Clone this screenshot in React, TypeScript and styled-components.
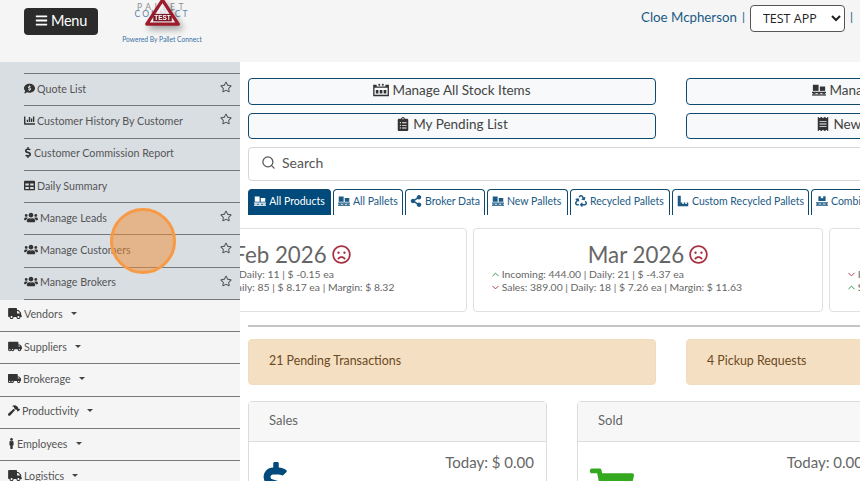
import styled, { createGlobalStyle } from 'styled-components';
import { ChevronDown, ChevronUp, Search } from 'lucide-react';
import {
  FaBars,
  FaChartBar,
  FaClipboardList,
  FaCommentDollar,
  FaDollarSign,
  FaHammer,
  FaMale,
  FaPallet,
  FaReceipt,
  FaRecycle,
  FaRegFrown,
  FaRegStar,
  FaShareAlt,
  FaShoppingCart,
  FaTable,
  FaTruck,
  FaTruckMoving,
  FaUsers,
} from 'react-icons/fa';

const GlobalStyle = createGlobalStyle`
  html, body {
    margin: 0;
    height: 100%;
    overflow: hidden;
    background: #fff;
    font-family: Lato, "Open Sans", sans-serif;
    color: #555;
  }
  * { box-sizing: border-box; }
`;

const PalletBoxes = () => (
  <svg width="1em" height="1em" viewBox="0 0 16 16" fill="currentColor">
    <rect x="1" y="2" width="6.5" height="7" />
    <rect x="9" y="4" width="6" height="5" />
    <rect x="0" y="10" width="16" height="1.6" />
    <rect x="1" y="11.6" width="3" height="1.4" />
    <rect x="6.5" y="11.6" width="3" height="1.4" />
    <rect x="12" y="11.6" width="3" height="1.4" />
    <rect x="0" y="13" width="16" height="1.4" />
  </svg>
);

const StockIcon = () => (
  <svg width="1.15em" height="1em" viewBox="0 0 18 16" fill="currentColor">
    <path d="M0 2h4v2h10V2h4v13H0z M1.5 5.5V13.5h15V5.5z" fillRule="evenodd" />
    <rect x="3" y="8" width="3" height="4" />
    <rect x="7.5" y="8" width="3" height="4" />
    <rect x="12" y="8" width="3" height="4" />
    <rect x="6" y="1" width="2" height="2" />
    <rect x="10" y="1" width="2" height="2" />
  </svg>
);

const CustomStepsIcon = () => (
  <svg width="1em" height="1em" viewBox="0 0 16 16" fill="currentColor">
    <path d="M1 1h4v9h2v2h2v-2h2v2h2v-2h2v5H1z" />
  </svg>
);

const subItems = [
  { icon: <FaCommentDollar />, w: 11, label: 'Quote List', star: true },
  { icon: <FaChartBar />, w: 11, label: 'Customer History By Customer', star: true },
  { icon: <FaDollarSign />, w: 8, label: 'Customer Commission Report', star: false },
  { icon: <FaTable />, w: 11, label: 'Daily Summary', star: false },
  { icon: <FaUsers />, w: 14, label: 'Manage Leads', star: true },
  { icon: <FaUsers />, w: 14, label: 'Manage Customers', star: true },
  { icon: <FaUsers />, w: 14, label: 'Manage Brokers', star: true },
];

const menuItems = [
  { icon: <FaTruck />, w: 14, label: 'Vendors' },
  { icon: <FaTruckMoving />, w: 14, label: 'Suppliers' },
  { icon: <FaTruckMoving />, w: 13, label: 'Brokerage' },
  { icon: <FaHammer />, w: 12, label: 'Productivity' },
  { icon: <FaMale />, w: 7, label: 'Employees' },
  { icon: <FaTruck />, w: 14, label: 'Logistics' },
];

const tabs = [
  { icon: <PalletBoxes />, label: 'All Products', width: 83 },
  { icon: <PalletBoxes />, label: 'All Pallets', width: 70 },
  { icon: <FaShareAlt />, label: 'Broker Data', width: 80 },
  { icon: <PalletBoxes />, label: 'New Pallets', width: 81 },
  { icon: <FaRecycle />, label: 'Recycled Pallets', width: 100 },
  { icon: <CustomStepsIcon />, label: 'Custom Recycled Pallets', width: 137 },
  { icon: <FaPallet />, label: 'Combined Pallets', width: 120 },
];

const App = () => {
  return (
    <Page>
      <GlobalStyle />
      <Header>
        <MenuButton>
          <FaBars />
          Menu
        </MenuButton>
        <Logo>
          <LogoWord>PALLET</LogoWord>
          <LogoWord $blue>CONNECT</LogoWord>
          <LogoMark viewBox="0 0 40 30">
            <path d="M20 1 L37 27 H3 Z" fill="#fff" fillOpacity="0.75" stroke="#9c1c2c" strokeWidth="3.6" strokeLinejoin="round" />
            <rect x="10" y="16" width="20" height="8" fill="#7c1826" />
            <text x="20" y="23" textAnchor="middle" fontSize="7" fontWeight="700" fill="#fff" fontFamily="Liberation Sans, sans-serif">
              TEST
            </text>
          </LogoMark>
          <LogoCaption>Powered By Pallet Connect</LogoCaption>
        </Logo>
        <UserArea>
          <UserName>Cloe Mcpherson</UserName>
          <Pipe>|</Pipe>
          <AppSelect defaultValue="TEST APP">
            <option>TEST APP</option>
          </AppSelect>
          <Pipe>|</Pipe>
        </UserArea>
      </Header>
      <Body>
        <Sidebar>
          <SubGroup>
            {subItems.map((item) => (
              <SubRow key={item.label}>
                <RowIcon $w={item.w}>{item.icon}</RowIcon>
                {item.label}
                {item.star && (
                  <Star>
                    <FaRegStar />
                  </Star>
                )}
              </SubRow>
            ))}
          </SubGroup>
          {menuItems.map((item) => (
            <MenuRow key={item.label}>
              <RowIcon $w={item.w}>{item.icon}</RowIcon>
              {item.label}
              <Caret />
            </MenuRow>
          ))}
          <ClickMarker />
        </Sidebar>
        <Main>
          <ButtonGrid>
            <ActionButton>
              <StockIcon />
              Manage All Stock Items
            </ActionButton>
            <ActionButton>
              <PalletBoxes />
              Manage All Pallet Items
            </ActionButton>
            <ActionButton>
              <FaClipboardList />
              My Pending List
            </ActionButton>
            <ActionButton>
              <FaReceipt />
              New Pending Request
            </ActionButton>
          </ButtonGrid>
          <SearchBox>
            <Search size={15} strokeWidth={2} />
            Search
          </SearchBox>
          <TabRow>
            {tabs.map((tab, i) => (
              <Tab key={tab.label} $active={i === 0} $width={tab.width}>
                {tab.icon}
                {tab.label}
              </Tab>
            ))}
          </TabRow>
          <CardRow>
            <MonthCard>
              <MonthTitle>
                Feb 2026
                <FaRegFrown />
              </MonthTitle>
              <StatLine>
                <Up size={11} /> Incoming: 1310.00 | Daily: 11 | $ -0.15 ea
              </StatLine>
              <StatLine>
                <Down size={11} /> Sales: 11,704.00 | Daily: 85 | $ 8.17 ea | Margin: $ 8.32
              </StatLine>
            </MonthCard>
            <MonthCard>
              <MonthTitle>
                Mar 2026
                <FaRegFrown />
              </MonthTitle>
              <StatLine>
                <Up size={11} /> Incoming: 444.00 | Daily: 21 | $ -4.37 ea
              </StatLine>
              <StatLine>
                <Down size={11} /> Sales: 389.00 | Daily: 18 | $ 7.26 ea | Margin: $ 11.63
              </StatLine>
            </MonthCard>
            <MonthCard>
              <MonthTitle>
                Apr 2026
                <FaRegFrown />
              </MonthTitle>
              <StatLine>
                <Down size={11} /> Incoming: 120.00 | Daily: 9 | $ -2.10 ea
              </StatLine>
              <StatLine>
                <Up size={11} /> Sales: 410.00 | Daily: 20 | $ 7.90 ea | Margin: $ 10.00
              </StatLine>
            </MonthCard>
          </CardRow>
          <Rule />
          <AlertGrid>
            <Alert>21 Pending Transactions</Alert>
            <Alert>4 Pickup Requests</Alert>
          </AlertGrid>
          <PanelRow>
            <Panel>
              <PanelHead>Sales</PanelHead>
              <PanelBody>
                <BigIcon $color="#004a7c" $left={5} $top={20}>
                  <FaDollarSign />
                </BigIcon>
                <Today>Today: $ 0.00</Today>
              </PanelBody>
            </Panel>
            <Panel>
              <PanelHead>Sold</PanelHead>
              <PanelBody>
                <BigIcon $color="#34a81f" $left={12} $top={24}>
                  <FaShoppingCart />
                </BigIcon>
                <Today>Today: 0.00</Today>
              </PanelBody>
            </Panel>
          </PanelRow>
        </Main>
      </Body>
    </Page>
  );
};
export default App;

const Page = styled.div`
  width: 860px;
  height: 481px;
  overflow: hidden;
  display: flex;
  flex-direction: column;
`;

const Header = styled.header`
  height: 62px;
  flex: none;
  background: #f5f5f5;
  display: flex;
  align-items: flex-start;
  padding-left: 24px;
`;

const MenuButton = styled.button`
  width: 74px;
  height: 27px;
  margin-top: 8px;
  border: 0;
  border-radius: 4px;
  background: #2b2b2b;
  color: #fff;
  font: 400 14.5px Lato, sans-serif;
  letter-spacing: -0.3px;
  display: flex;
  align-items: center;
  justify-content: center;
  gap: 3px;
  padding: 0 0 2px;
  svg {
    font-size: 13px;
  }
`;

const Logo = styled.div`
  position: relative;
  width: 90px;
  margin-left: 19px;
  padding-top: 4px;
  text-align: center;
`;

const LogoWord = styled.div<{ $blue?: boolean }>`
  font-size: 8.5px;
  line-height: 6.5px;
  letter-spacing: ${(p) => (p.$blue ? '2px' : '3.5px')};
  color: ${(p) => (p.$blue ? '#5c83a8' : '#8a8f96')};
`;

const LogoMark = styled.svg`
  position: absolute;
  left: 27px;
  top: -1px;
  width: 37px;
  height: 28px;
  filter: drop-shadow(3px 4px 3px rgba(0, 0, 0, 0.35));
`;

const LogoCaption = styled.div`
  margin-top: 18px;
  font-size: 6.7px;
  line-height: 9px;
  color: #3a72a6;
  white-space: nowrap;
`;

const UserArea = styled.div`
  margin-left: auto;
  width: 219px;
  height: 27px;
  margin-top: 5px;
  display: flex;
  align-items: center;
  flex: none;
  color: #1a5a85;
  font-size: 13.3px;
`;

const UserName = styled.span`
  color: #1a5a85;
  white-space: nowrap;
  padding-bottom: 4px;
`;

const Pipe = styled.span`
  margin: 0 5px;
  font-size: 12px;
  padding-bottom: 4px;
`;

const AppSelect = styled.select`
  width: 95px;
  height: 27px;
  border: 1px solid #555;
  border-radius: 4px;
  background: #fff;
  color: #222;
  font: 400 12.5px "Open Sans", sans-serif;
  padding-left: 8px;
`;

const Body = styled.div`
  flex: 1;
  display: flex;
  min-height: 0;
`;

const Sidebar = styled.nav`
  position: relative;
  width: 240px;
  flex: none;
  background: #f5f5f5;
  font-size: 10.7px;
  color: #555;
`;

const SubGroup = styled.div`
  background: #d9dee3;
  padding: 11px 0 0 24px;
`;

const SubRow = styled.div`
  height: 32.3px;
  border-top: 1px solid #777;
  display: flex;
  align-items: center;
  gap: 2px;
  position: relative;
  padding-bottom: 3px;
  white-space: nowrap;
  color: #555;
  &:last-child {
    height: 33px;
    border-bottom: 1px solid #777;
  }
`;

const RowIcon = styled.span<{ $w: number }>`
  display: inline-flex;
  flex: none;
  justify-content: flex-start;
  width: ${(p) => p.$w}px;
  color: #333;
  svg {
    width: 100%;
    height: 11px;
  }
`;

const Star = styled.span`
  position: absolute;
  right: 8px;
  top: 7px;
  font-size: 12px;
  color: #555;
`;

const MenuRow = styled.div`
  height: 32.3px;
  padding: 0 0 3px 8px;
  border-bottom: 1px solid #777;
  display: flex;
  align-items: center;
  gap: 2px;
  white-space: nowrap;
`;

const Caret = styled.span`
  margin-left: 6px;
  border-top: 3px solid #444;
  border-left: 3px solid transparent;
  border-right: 3px solid transparent;
`;

const ClickMarker = styled.div`
  position: absolute;
  left: 110px;
  top: 146px;
  width: 66px;
  height: 66px;
  border-radius: 50%;
  border: 3px solid #f79a45;
  background: rgba(240, 140, 50, 0.5);
`;

const Main = styled.main`
  flex: none;
  width: 620px;
  padding: 16px 0 0 8px;
  overflow: hidden;
  background: #fff;
`;

const ButtonGrid = styled.div`
  display: grid;
  grid-template-columns: 408px 408px;
  gap: 8px 30px;
`;

const ActionButton = styled.button`
  height: 26.5px;
  border: 1px solid #0f4a6e;
  border-radius: 4px;
  background: #f7f9fa;
  color: #444;
  font: 400 13.5px Lato, sans-serif;
  display: flex;
  align-items: center;
  justify-content: center;
  gap: 3px;
  padding: 0 0 3px;
  white-space: nowrap;
  svg {
    font-size: 14px;
    color: #333;
  }
`;

const SearchBox = styled.div`
  width: 640px;
  height: 34px;
  margin-top: 8px;
  border: 1px solid #d4d6d8;
  border-radius: 4px;
  display: flex;
  align-items: center;
  gap: 6px;
  padding: 0 0 4px 12px;
  font-size: 14px;
  color: #555;
`;

const TabRow = styled.div`
  display: flex;
  gap: 2px;
  margin-top: 8px;
  width: 700px;
`;

const Tab = styled.div<{ $active?: boolean; $width: number }>`
  flex: none;
  width: ${(p) => p.$width}px;
  height: 26px;
  border: 1px solid #0f4a6e;
  border-bottom: 0;
  border-radius: 4px 4px 0 0;
  background: ${(p) => (p.$active ? '#004a7c' : '#fff')};
  color: ${(p) => (p.$active ? '#fff' : '#1a5a85')};
  font-size: 10.5px;
  display: flex;
  align-items: center;
  justify-content: ${(p) => (p.$active ? 'center' : 'flex-start')};
  gap: 3px;
  padding: 0 0 3px ${(p) => (p.$active ? 0 : 4)}px;
  white-space: nowrap;
  svg {
    font-size: 12px;
    flex: none;
  }
`;

const CardRow = styled.div`
  display: flex;
  gap: 6px;
  margin: 13px 0 0 -131px;
  width: 1100px;
`;

const MonthCard = styled.div`
  flex: none;
  width: 350px;
  height: 84px;
  border: 1px solid #dfdfdf;
  border-radius: 4px;
  padding-top: 12px;
  text-align: center;
`;

const MonthTitle = styled.div`
  font-size: 22.3px;
  line-height: 27px;
  color: #666;
  display: flex;
  justify-content: center;
  align-items: center;
  gap: 5px;
  svg {
    font-size: 19px;
    color: #a83244;
  }
`;

const StatLine = styled.div`
  font-size: 10.4px;
  line-height: 13px;
  color: #666;
  text-align: left;
  padding-left: 16px;
  white-space: nowrap;
  svg {
    margin-right: -2px;
  }
`;

const Up = styled(ChevronUp)`
  color: #2d8a34;
  vertical-align: -2px;
`;

const Down = styled(ChevronDown)`
  color: #a83244;
  vertical-align: -2px;
`;

const Rule = styled.div`
  height: 2px;
  margin-top: 13px;
  background: #c4c4c4;
`;

const AlertGrid = styled.div`
  display: grid;
  grid-template-columns: 408px 408px;
  gap: 30px;
  margin-top: 12px;
`;

const Alert = styled.div`
  height: 46px;
  border: 1px solid #f0dcc0;
  border-radius: 4px;
  background: #f5dfc3;
  color: #6b4a22;
  font-size: 12.4px;
  display: flex;
  align-items: center;
  padding: 0 0 3px 20px;
`;

const PanelRow = styled.div`
  display: flex;
  gap: 30px;
  margin-top: 16px;
`;

const Panel = styled.div`
  flex: none;
  width: 299px;
  height: 200px;
  border: 1px solid #dcdcdc;
  border-radius: 4px;
`;

const PanelHead = styled.div`
  height: 40px;
  background: #f7f7f7;
  border-bottom: 1px solid #dcdcdc;
  display: flex;
  align-items: center;
  padding: 0 0 3px 20px;
  font-size: 13px;
  color: #666;
`;

const PanelBody = styled.div`
  position: relative;
  padding: 11px 12px 0 0;
`;

const BigIcon = styled.span<{ $color: string; $left: number; $top: number }>`
  position: absolute;
  left: ${(p) => p.$left}px;
  top: ${(p) => p.$top}px;
  font-size: 44px;
  color: ${(p) => p.$color};
`;

const Today = styled.div`
  text-align: right;
  font-size: 15px;
  color: #666;
  white-space: nowrap;
`;
